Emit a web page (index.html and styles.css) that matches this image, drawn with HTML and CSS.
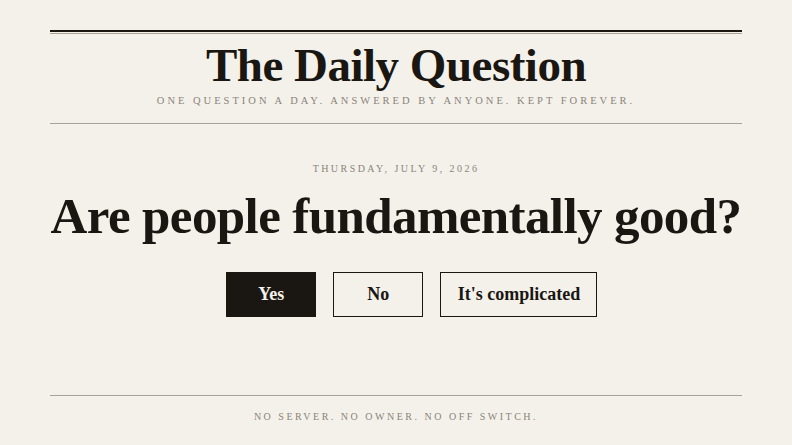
FILE: index.html
```html
<!DOCTYPE html>
<html lang="en">
<head>
<meta charset="utf-8">
<title>The Daily Question</title>
<link rel="stylesheet" href="styles.css">
</head>
<body>
<div class="page">
  <header class="masthead">
    <div class="masthead-inner">
      <h1 class="title">The Daily Question</h1>
      <p class="tagline">One question a day. Answered by anyone. Kept forever.</p>
    </div>
  </header>
  <main class="today">
    <p class="date">Thursday, July 9, 2026</p>
    <h2 class="question">Are people fundamentally good?</h2>
    <div class="answers">
      <button class="answer answer-selected">Yes</button>
      <button class="answer">No</button>
      <button class="answer">It's complicated</button>
    </div>
  </main>
  <footer class="footer">
    <p class="footer-text">No server. No owner. No off switch.</p>
  </footer>
</div>
</body>
</html>
```

FILE: styles.css
```css
* { box-sizing: border-box; }
html, body { margin: 0; padding: 0; }
body {
  background: #f4f1eb;
  color: #1a1612;
  font-family: "Liberation Serif", "DejaVu Serif", serif;
}
.page {
  width: 692px;
  margin: 0 auto;
  padding-top: 30px;
}
.masthead {
  border-top: 2px solid #1a1612;
  padding-top: 1px;
}
.masthead-inner {
  border-top: 1px solid #a8a298;
  border-bottom: 1px solid #a8a298;
  text-align: center;
  padding: 3px 0 15px;
}
.title {
  margin: 0;
  font-size: 47px;
  line-height: 56px;
  font-weight: 700;
  letter-spacing: -0.5px;
  white-space: nowrap;
}
.tagline {
  margin: 1px 0 0;
  font-size: 10.5px;
  line-height: 14px;
  letter-spacing: 3px;
  text-transform: uppercase;
  color: #8a8479;
}
.today {
  text-align: center;
  padding-top: 38px;
  height: 271px;
}
.date {
  margin: 0;
  font-size: 10px;
  line-height: 14px;
  letter-spacing: 2.45px;
  text-transform: uppercase;
  color: #8a8479;
}
.question {
  margin: 8px -10px 0;
  font-size: 51px;
  line-height: 64px;
  font-weight: 700;
  letter-spacing: -0.6px;
  white-space: nowrap;
}
.answers {
  display: flex;
  justify-content: center;
  gap: 17px;
  margin-top: 24px;
  padding-left: 31px;
}
.answer {
  font-family: inherit;
  font-size: 18px;
  font-weight: 700;
  height: 45px;
  min-width: 90px;
  padding: 0 16px 0 17px;
  background: transparent;
  color: #1a1612;
  border: 1px solid #1a1612;
  border-radius: 0;
}
.answer-selected {
  background: #1a1612;
  color: #f4f1eb;
}
.footer {
  border-top: 1px solid #a8a298;
  text-align: center;
  padding-top: 14px;
}
.footer-text {
  margin: 0;
  font-size: 10px;
  line-height: 14px;
  letter-spacing: 2.5px;
  text-transform: uppercase;
  color: #8a8479;
}
```
